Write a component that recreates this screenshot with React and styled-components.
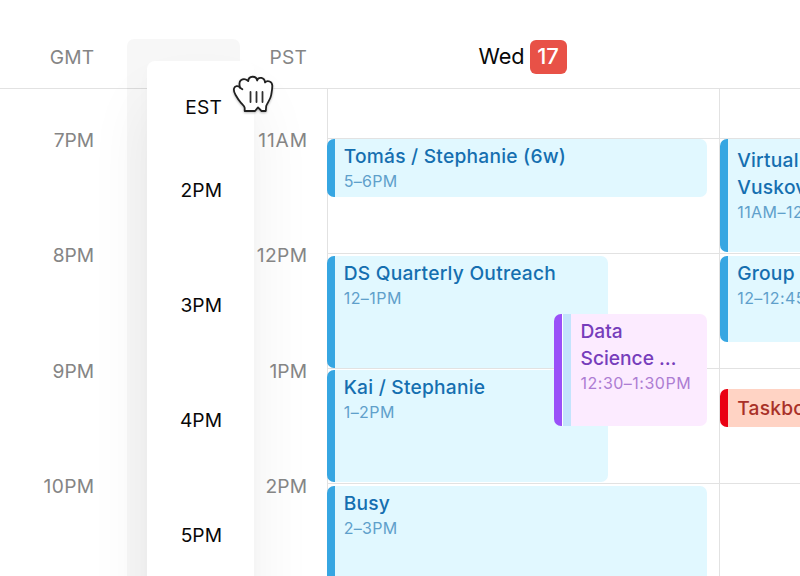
import React from "react";
import styled, { createGlobalStyle } from "styled-components";

const GlobalStyle = createGlobalStyle`
  * { box-sizing: border-box; }
  html, body { margin: 0; background: #fff; overflow: hidden; }
`;

const HOUR = 115.2;
const LINE = "#e2e2e2";

const blue = { bar: "#36a6e2", fill: "#e1f8ff", title: "#156fb0", time: "#5fa0cb" };
const purple = { bar: "#9a50f8", fill: "#fcebff", title: "#763dbb", time: "#ad7dd3" };
const red = { bar: "#ea0012", fill: "#ffd3c4", title: "#a93128", time: "#a93128" };

const Calendar = styled.div`
  position: relative;
  width: 800px;
  height: 576px;
  overflow: hidden;
  display: grid;
  grid-template-columns: 127px 113px 87px 392px 81px;
  grid-template-rows: 88px 488px;
  background: #fff;
  font-family: Inter, "Liberation Sans", sans-serif;
`;

const HeaderRule = styled.div`
  grid-area: 2 / 1 / 3 / 6;
  border-top: 1.5px solid ${LINE};
`;

const ZoneColumn = styled.div`
  grid-area: 1 / ${(p) => p.$col} / 3 / ${(p) => p.$col + 1};
  position: relative;
  display: flex;
  flex-direction: column;
  padding: 45px ${(p) => p.$pad}px 0 0;
  color: #858585;
`;

const zoneText = `
  font-size: 19.2px;
  line-height: 24px;
  text-align: right;
  white-space: nowrap;
`;

const ZoneName = styled.div`
  ${zoneText}
  letter-spacing: 0.15px;
  margin-bottom: 59.2px;
  flex: none;
`;

const HourLabel = styled.div`
  ${zoneText}
  letter-spacing: ${(p) => p.$tracking}px;
  margin-right: ${(p) => -p.$tracking}px;
  height: ${HOUR}px;
  flex: none;
`;

const DropSlot = styled.div`
  grid-area: 1 / 2 / 3 / 3;
  margin-top: 39px;
  border-radius: 7px 7px 0 0;
  background: rgba(0, 0, 0, 0.032);
`;

const DraggedZone = styled.div`
  position: absolute;
  left: 147px;
  top: 61px;
  width: 107px;
  height: 600px;
  padding: 33.7px 32px 0 0;
  border-radius: 8px;
  background: #fff;
  color: #080808;
  box-shadow: 0 40px 64px rgba(0, 0, 0, 0.065), 0 8px 14px rgba(0, 0, 0, 0.02);
`;

const GrabCursor = styled.svg`
  position: absolute;
  left: 230px;
  top: 73px;
  width: 46px;
  height: 44px;
  filter: drop-shadow(0 1.5px 1.2px rgba(0, 0, 0, 0.28));
`;

const DayHeader = styled.div`
  grid-area: 1 / 4 / 2 / 5;
  display: flex;
  align-items: center;
  justify-content: center;
  gap: 5px;
  padding: 25px 1px 0 0;
  font-size: 21.7px;
  line-height: 30px;
  color: #080808;
`;

const DayName = styled.span`
  margin-top: -1px;
`;

const DateBadge = styled.span`
  display: grid;
  place-items: center;
  width: 37px;
  height: 34px;
  padding-bottom: 1px;
  border-radius: 6px;
  background: #e85147;
  color: #fff;
  font-size: 22px;
  font-weight: 500;
`;

const SlotLines = styled.div`
  grid-area: 2 / ${(p) => p.$col} / 3 / ${(p) => p.$col + 1};
  border-left: 1.5px solid ${LINE};
  padding-top: 49.5px;
  overflow: hidden;
`;

const Slot = styled.div`
  height: ${HOUR}px;
  border-top: 1px solid ${LINE};
`;

const DayEvents = styled.div`
  grid-area: 2 / ${(p) => p.$col} / 3 / ${(p) => p.$col + 1};
  position: relative;
  display: flex;
  flex-direction: column;
  padding: 51px ${(p) => p.$right}px 0 0;
  margin-left: ${(p) => p.$shift}px;
`;

const EventCard = styled.article`
  flex: none;
  width: ${(p) => (p.$w ? p.$w + "px" : "auto")};
  height: ${(p) => p.$h}px;
  margin-bottom: ${(p) => p.$gap || 0}px;
  padding: ${(p) => p.$top ?? 4}px 0 0 ${(p) => p.$inset ?? 9.2}px;
  border-left: 8px solid ${(p) => p.$tone.bar};
  border-radius: 7px;
  background: ${(p) => p.$tone.fill};
  overflow: hidden;
  white-space: nowrap;
`;

const OverlapCard = styled(EventCard)`
  position: absolute;
  left: 227px;
  top: 226px;
  background: linear-gradient(
    to right,
    #fff 0 1.5px,
    #c3e4fc 1.5px 9.5px,
    ${purple.fill} 9.5px
  ) padding-box;
`;

const EventTitle = styled.div`
  font-size: 19.2px;
  font-weight: 500;
  line-height: 27px;
  letter-spacing: ${(p) => p.$tracking}px;
  color: ${(p) => p.$tone.title};
`;

const EventTime = styled.div`
  font-size: 16px;
  line-height: 23px;
  letter-spacing: ${(p) => p.$tracking}px;
  color: ${(p) => p.$tone.time};
`;

function Event({ as: Card = EventCard, tone, lines, time, titleTracking = 0.23, timeTracking = 0.45, ...rest }) {
  return (
    <Card $tone={tone} {...rest}>
      {lines.map((line) => (
        <EventTitle key={line} $tone={tone} $tracking={titleTracking}>{line}</EventTitle>
      ))}
      {time && <EventTime $tone={tone} $tracking={timeTracking}>{time}</EventTime>}
    </Card>
  );
}

const hourTracking = { "11AM": 0.85, "12PM": 0.35, "10PM": 0.4 };

function Zone({ name, hours }) {
  return (
    <>
      <ZoneName>{name}</ZoneName>
      {hours.map((h) => (
        <HourLabel key={h} $tracking={hourTracking[h] ?? 0.05}>{h}</HourLabel>
      ))}
    </>
  );
}

export default function App() {
  return (
    <>
      <GlobalStyle />
      <Calendar>
        <HeaderRule />
        <DropSlot />
        <DayHeader>
          <DayName>Wed</DayName>
          <DateBadge>17</DateBadge>
        </DayHeader>
        <SlotLines $col={4}><Slot /><Slot /><Slot /><Slot /></SlotLines>
        <SlotLines $col={5}><Slot /><Slot /><Slot /><Slot /></SlotLines>
        <DraggedZone>
          <Zone name="EST" hours={["2PM", "3PM", "4PM", "5PM"]} />
        </DraggedZone>
        <ZoneColumn $col={1} $pad={32.8}>
          <Zone name="GMT" hours={["7PM", "8PM", "9PM", "10PM"]} />
        </ZoneColumn>
        <ZoneColumn $col={3} $pad={20}>
          <Zone name="PST" hours={["11AM", "12PM", "1PM", "2PM"]} />
        </ZoneColumn>
        <DayEvents $col={4} $right={12} $shift={-0.5}>
          <Event tone={blue} lines={["Tomás / Stephanie (6w)"]} time="5–6PM" timeTracking={0.3} $h={58} $gap={59} />
          <Event tone={blue} lines={["DS Quarterly Outreach"]} time="12–1PM" $w={281.5} $h={112} $gap={2} />
          <Event tone={blue} lines={["Kai / Stephanie"]} time="1–2PM" $w={281.5} $h={112} $gap={4} />
          <Event tone={blue} lines={["Busy"]} time="2–3PM" timeTracking={0.3} $h={110} />
          <Event as={OverlapCard} tone={purple} lines={["Data", "Science …"]} time="12:30–1:30PM" titleTracking={0} timeTracking={0.5} $w={153.5} $h={112} $inset={19} />
        </DayEvents>
        <DayEvents $col={5} $right={0} $shift={0.5}>
          <Event tone={blue} lines={["Virtual", "Vuskov"]} time="11AM–12" $w={180} $h={112.5} $gap={4.5} $top={7.5} $inset={9.7} />
          <Event tone={blue} lines={["Group"]} time="12–12:45" $w={180} $h={86} $gap={47} $inset={9.7} />
          <Event tone={red} lines={["Taskbo"]} $w={180} $h={38} $top={5.5} $inset={9.7} />
        </DayEvents>
        <GrabCursor viewBox="0 0 46 44">
          <path
            d="M14.7 38 L14.7 34.8 C14.4 33 12.8 31.8 11 29.8 C8.8 27.5 7.3 25 5.6 22 C4.2 19.7 3.4 18.3 4 15.6 C4.8 12.8 8 12.3 10.1 14.7 C9.3 12 8.5 8.8 11.2 7 C13.7 5.4 16.8 6.4 18.3 8.1 C18.4 2.4 26.5 2.4 27.1 7.5 C28.5 3.2 34.6 4.3 35 9.5 C37.4 6.8 42.4 8.3 42.3 13 C42.3 16 41.6 19 41.2 22 C40.7 26 37.2 30 36.2 33 L35.8 38 L31.5 38 L28 34.4 L25 38 Z"
            fill="#fff" stroke="#202020" strokeWidth="1.8" strokeLinejoin="round"
          />
          <path d="M10.1 14.7 L12.4 16.3" stroke="#202020" strokeWidth="1.8" strokeLinecap="round" />
          <path d="M20.5 19 V29 M26.5 19 V29 M32.5 19 V29" stroke="#303030" strokeWidth="1.8" strokeLinecap="round" />
        </GrabCursor>
      </Calendar>
    </>
  );
}
